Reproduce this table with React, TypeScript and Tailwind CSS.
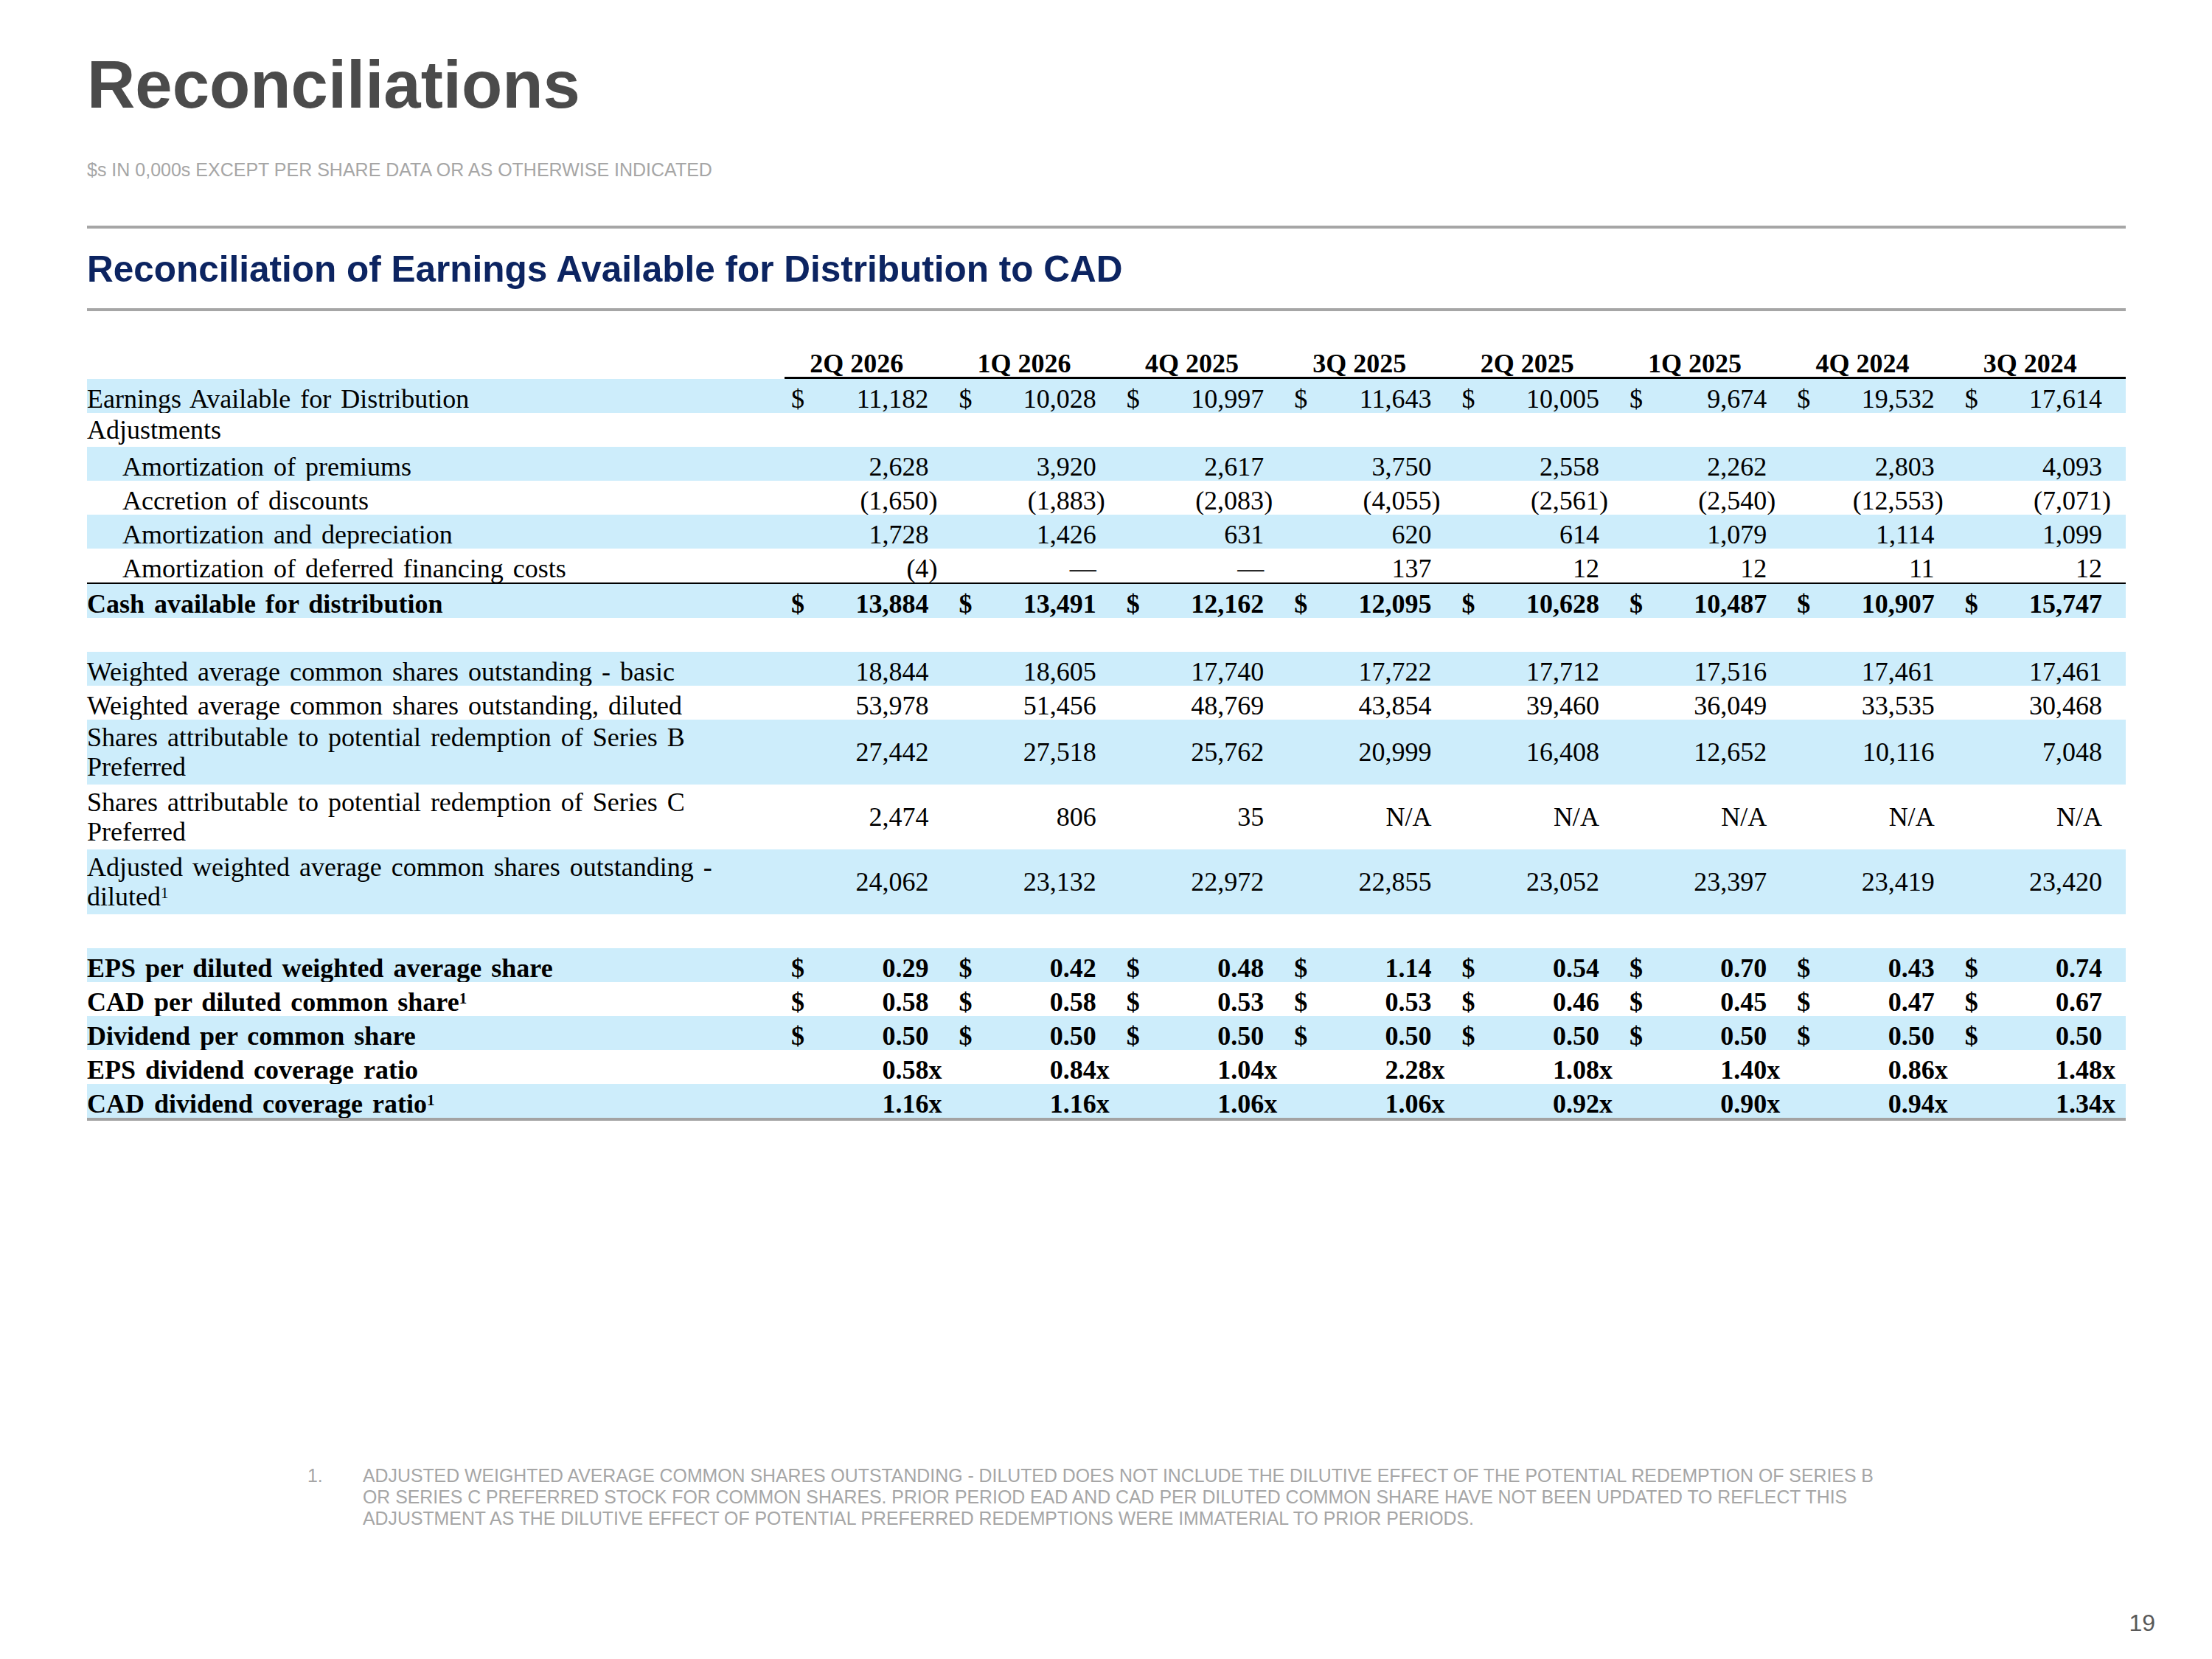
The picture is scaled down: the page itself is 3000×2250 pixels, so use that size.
import React from "react";

const cols = ["2Q 2026", "1Q 2026", "4Q 2025", "3Q 2025", "2Q 2025", "1Q 2025", "4Q 2024", "3Q 2024"];

type Row = {
  label?: React.ReactNode;
  indent?: boolean;
  bold?: boolean;
  dollar?: boolean;
  values?: string[];
  suffix?: string;
  tall?: boolean;
  band: boolean;
  lineAfter?: "black" | "gray";
};

const Sup = () => <sup className="text-[21px]">1</sup>;

const rows: Row[] = [
  {
    label: "Earnings Available for Distribution",
    dollar: true,
    values: ["11,182", "10,028", "10,997", "11,643", "10,005", "9,674", "19,532", "17,614"],
    band: true,
  },
  { label: "Adjustments", band: false },
  {
    label: "Amortization of premiums",
    indent: true,
    values: ["2,628", "3,920", "2,617", "3,750", "2,558", "2,262", "2,803", "4,093"],
    band: true,
  },
  {
    label: "Accretion of discounts",
    indent: true,
    values: ["(1,650)", "(1,883)", "(2,083)", "(4,055)", "(2,561)", "(2,540)", "(12,553)", "(7,071)"],
    band: false,
  },
  {
    label: "Amortization and depreciation",
    indent: true,
    values: ["1,728", "1,426", "631", "620", "614", "1,079", "1,114", "1,099"],
    band: true,
  },
  {
    label: "Amortization of deferred financing costs",
    indent: true,
    values: ["(4)", "\u2014", "\u2014", "137", "12", "12", "11", "12"],
    band: false,
    lineAfter: "black",
  },
  {
    label: "Cash available for distribution",
    bold: true,
    dollar: true,
    values: ["13,884", "13,491", "12,162", "12,095", "10,628", "10,487", "10,907", "15,747"],
    band: true,
  },
  { band: false },
  {
    label: "Weighted average common shares outstanding - basic",
    values: ["18,844", "18,605", "17,740", "17,722", "17,712", "17,516", "17,461", "17,461"],
    band: true,
  },
  {
    label: "Weighted average common shares outstanding, diluted",
    values: ["53,978", "51,456", "48,769", "43,854", "39,460", "36,049", "33,535", "30,468"],
    band: false,
  },
  {
    label: (
      <>
        Shares attributable to potential redemption of Series B
        <br />
        Preferred
      </>
    ),
    tall: true,
    values: ["27,442", "27,518", "25,762", "20,999", "16,408", "12,652", "10,116", "7,048"],
    band: true,
  },
  {
    label: (
      <>
        Shares attributable to potential redemption of Series C
        <br />
        Preferred
      </>
    ),
    tall: true,
    values: ["2,474", "806", "35", "N/A", "N/A", "N/A", "N/A", "N/A"],
    band: false,
  },
  {
    label: (
      <>
        Adjusted weighted average common shares outstanding -
        <br />
        diluted
        <Sup />
      </>
    ),
    tall: true,
    values: ["24,062", "23,132", "22,972", "22,855", "23,052", "23,397", "23,419", "23,420"],
    band: true,
  },
  { band: false },
  {
    label: "EPS per diluted weighted average share",
    bold: true,
    dollar: true,
    values: ["0.29", "0.42", "0.48", "1.14", "0.54", "0.70", "0.43", "0.74"],
    band: true,
  },
  {
    label: (
      <>
        CAD per diluted common share
        <Sup />
      </>
    ),
    bold: true,
    dollar: true,
    values: ["0.58", "0.58", "0.53", "0.53", "0.46", "0.45", "0.47", "0.67"],
    band: false,
  },
  {
    label: "Dividend per common share",
    bold: true,
    dollar: true,
    values: ["0.50", "0.50", "0.50", "0.50", "0.50", "0.50", "0.50", "0.50"],
    band: true,
  },
  {
    label: "EPS dividend coverage ratio",
    bold: true,
    suffix: "x",
    values: ["0.58", "0.84", "1.04", "2.28", "1.08", "1.40", "0.86", "1.48"],
    band: false,
  },
  {
    label: (
      <>
        CAD dividend coverage ratio
        <Sup />
      </>
    ),
    bold: true,
    suffix: "x",
    values: ["1.16", "1.16", "1.06", "1.06", "0.92", "0.90", "0.94", "1.34"],
    band: true,
    lineAfter: "gray",
  },
];

function ValueCell({ value, dollar, suffix }: { value: string; dollar?: boolean; suffix?: string }) {
  let num = value;
  let suf = suffix ?? "";
  if (value.endsWith(")")) {
    num = value.slice(0, -1);
    suf = ")";
  }
  return (
    <div className="flex items-center">
      <span className="w-[40px] pl-[9px]">{dollar ? "$" : ""}</span>
      <span className="flex-1 text-right whitespace-nowrap">{num}</span>
      <span className="w-[32px] text-left">{suf}</span>
    </div>
  );
}

function TableRow({ row }: { row: Row }) {
  return (
    <>
      <div
        className={`grid grid-cols-[946px_repeat(8,minmax(0,1fr))] items-center ${
          row.tall ? "h-[88px]" : "h-[46px]"
        } ${row.band ? "bg-[#cdedfb]" : "bg-white"} ${row.bold ? "font-bold" : "font-normal"}`}
      >
        <div
          className={`${row.indent ? "pl-[48px]" : ""} ${
            row.tall ? "leading-[40px]" : "leading-[46px]"
          } whitespace-nowrap [word-spacing:4px]`}
        >
          {row.label}
        </div>
        {row.values
          ? row.values.map((v, i) => <ValueCell key={i} value={v} dollar={row.dollar} suffix={row.suffix} />)
          : null}
      </div>
      {row.lineAfter === "black" ? <div className="h-[2px] bg-black" /> : null}
      {row.lineAfter === "gray" ? <div className="h-[4px] bg-[#a3a3a3]" /> : null}
    </>
  );
}

export default function App() {
  return (
    <div
      className="w-[3000px] h-[2250px] bg-white flex flex-col"
      style={{ fontFamily: '"Liberation Sans", Arial, sans-serif' }}
    >
      <div className="pl-[118px] pr-[117px] flex flex-col">
        <h1 className="pt-[70px] text-[90.5px] leading-[90px] font-bold text-[#4b4b4b]">Reconciliations</h1>
        <p className="mt-[58px] text-[25px] leading-[25px] text-[#a6a6a6] whitespace-nowrap">
          $s IN 0,000s EXCEPT PER SHARE DATA OR AS OTHERWISE INDICATED
        </p>
        <div className="mt-[63px] h-[4px] bg-[#a6a6a6]" />
        <h2 className="mt-[30px] text-[49.5px] leading-[49px] font-bold text-[#0c2461] whitespace-nowrap">
          Reconciliation of Earnings Available for Distribution to CAD
        </h2>
        <div className="mt-[29px] h-[4px] bg-[#a6a6a6]" />

        <div
          className="flex flex-col text-[36px] text-black"
          style={{ fontFamily: '"Liberation Serif", "Times New Roman", serif' }}
        >
          <div className="grid grid-cols-[946px_repeat(8,minmax(0,1fr))] h-[92px] items-end">
            <div />
            {cols.map((c) => (
              <div key={c} className="border-b-[3px] border-black">
                <div className="pr-[32px] text-center font-bold leading-[36px] whitespace-nowrap">{c}</div>
              </div>
            ))}
          </div>
          {rows.map((r, i) => (
            <TableRow key={i} row={r} />
          ))}
        </div>
      </div>

      <div className="mt-[467px] flex pl-[417px] text-[24.85px] leading-[29px] text-[#a6a6a6]">
        <div className="w-[75px]">1.</div>
        <div className="whitespace-nowrap">
          ADJUSTED WEIGHTED AVERAGE COMMON SHARES OUTSTANDING - DILUTED DOES NOT INCLUDE THE DILUTIVE EFFECT OF THE
          POTENTIAL REDEMPTION OF SERIES B
          <br />
          OR SERIES C PREFERRED STOCK FOR COMMON SHARES. PRIOR PERIOD EAD AND CAD PER DILUTED COMMON SHARE HAVE NOT BEEN
          UPDATED TO REFLECT THIS
          <br />
          ADJUSTMENT AS THE DILUTIVE EFFECT OF POTENTIAL PREFERRED REDEMPTIONS WERE IMMATERIAL TO PRIOR PERIODS.
        </div>
      </div>

      <div className="mt-[111px] flex justify-end pr-[77px]">
        <span className="text-[32px] leading-[32px] text-[#595959]">19</span>
      </div>
    </div>
  );
}
